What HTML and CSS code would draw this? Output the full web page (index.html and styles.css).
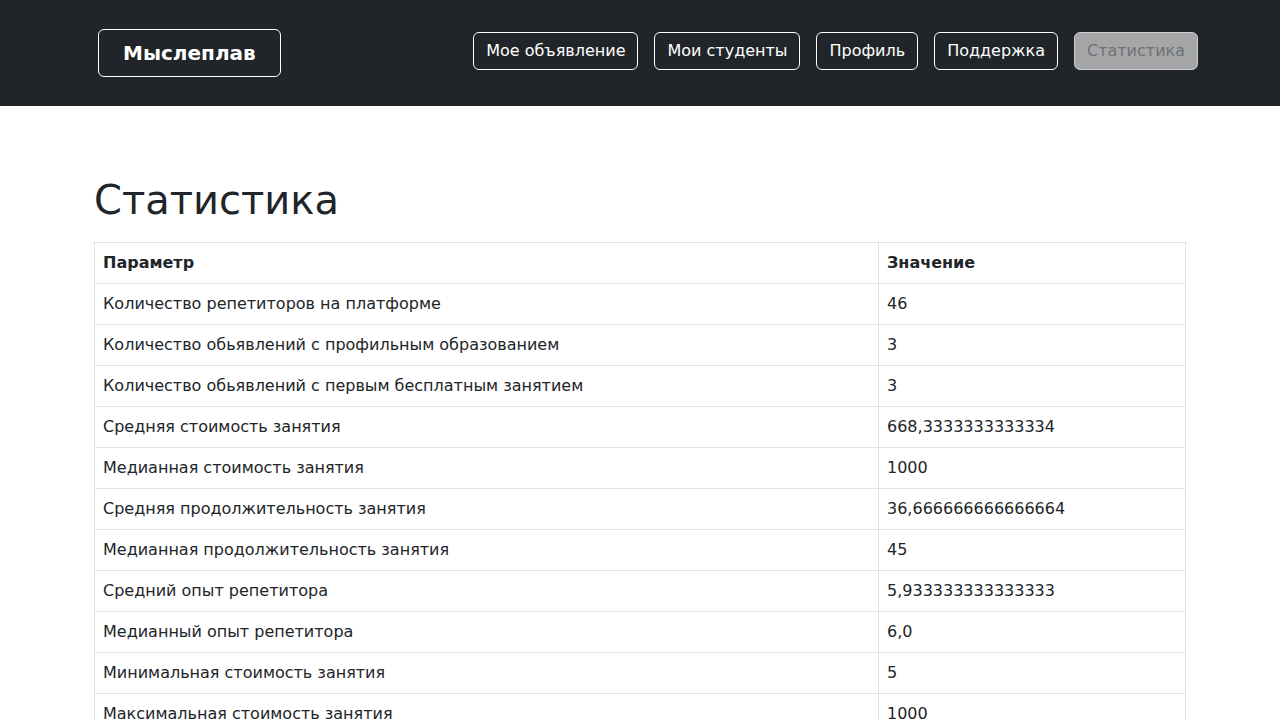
FILE: index.html
```html
<!DOCTYPE html>
<html lang="ru">
<head>
<meta charset="utf-8">
<title>Статистика</title>
<link rel="stylesheet" href="styles.css">
</head>
<body>
<header class="topbar">
  <div class="topbar-inner">
    <a class="brand" href="#">Мыслеплав</a>
    <nav class="nav">
      <a class="nav-btn" href="#">Мое объявление</a>
      <a class="nav-btn" href="#">Мои студенты</a>
      <a class="nav-btn" href="#">Профиль</a>
      <a class="nav-btn" href="#">Поддержка</a>
      <a class="nav-btn active" href="#">Статистика</a>
    </nav>
  </div>
</header>
<main class="container">
  <h1 class="title">Статистика</h1>
  <table class="stats">
    <colgroup><col class="col-param"><col class="col-value"></colgroup>
    <thead>
      <tr><th>Параметр</th><th>Значение</th></tr>
    </thead>
    <tbody>
      <tr><td>Количество репетиторов на платформе</td><td>46</td></tr>
      <tr><td>Количество обьявлений с профильным образованием</td><td>3</td></tr>
      <tr><td>Количество обьявлений с первым бесплатным занятием</td><td>3</td></tr>
      <tr><td>Средняя стоимость занятия</td><td>668,3333333333334</td></tr>
      <tr><td>Медианная стоимость занятия</td><td>1000</td></tr>
      <tr><td>Средняя продолжительность занятия</td><td>36,666666666666664</td></tr>
      <tr><td>Медианная продолжительность занятия</td><td>45</td></tr>
      <tr><td>Средний опыт репетитора</td><td>5,933333333333333</td></tr>
      <tr><td>Медианный опыт репетитора</td><td>6,0</td></tr>
      <tr><td>Минимальная стоимость занятия</td><td>5</td></tr>
      <tr><td>Максимальная стоимость занятия</td><td>1000</td></tr>
    </tbody>
  </table>
</main>
</body>
</html>
```
FILE: styles.css
```css
* { box-sizing: border-box; }
html, body { margin: 0; padding: 0; }
body {
  font-family: "DejaVu Sans", sans-serif;
  font-size: 16px;
  line-height: 1.5;
  color: #212529;
  background: #fff;
}
.topbar {
  background: #212529;
  height: 106px;
}
.topbar-inner {
  width: 1116px;
  margin: 0 auto;
  height: 100%;
  display: flex;
  align-items: center;
  justify-content: space-between;
  padding-left: 16px;
  padding-bottom: 4px;
}
.brand {
  display: block;
  color: #fff;
  text-decoration: none;
  font-weight: bold;
  font-size: 20px;
  line-height: 30px;
  padding: 8px 24px;
  border: 1px solid #fff;
  border-radius: 6px;
  margin-top: 4px;
}
.nav {
  display: flex;
  gap: 16px;
}
.nav-btn {
  display: block;
  color: #fff;
  text-decoration: none;
  font-size: 16px;
  line-height: 24px;
  padding: 6px 12px;
  border: 1px solid #fff;
  border-radius: 6px;
}
.nav-btn.active {
  background: #a5a6a7;
  color: #6f7174;
  border-color: #cbcccd;
}
.container {
  width: 1116px;
  margin: 0 auto;
  padding: 70px 12px 0 12px;
}
.title {
  font-size: 40px;
  font-weight: 400;
  line-height: 48px;
  margin: 0 0 18px 0;
}
.stats {
  width: 100%;
  border-collapse: collapse;
}
.col-param { width: 784px; }
.stats th, .stats td {
  border: 1px solid #dee2e6;
  padding: 8px;
  text-align: left;
  vertical-align: top;
}
.stats th { font-weight: bold; }
```
